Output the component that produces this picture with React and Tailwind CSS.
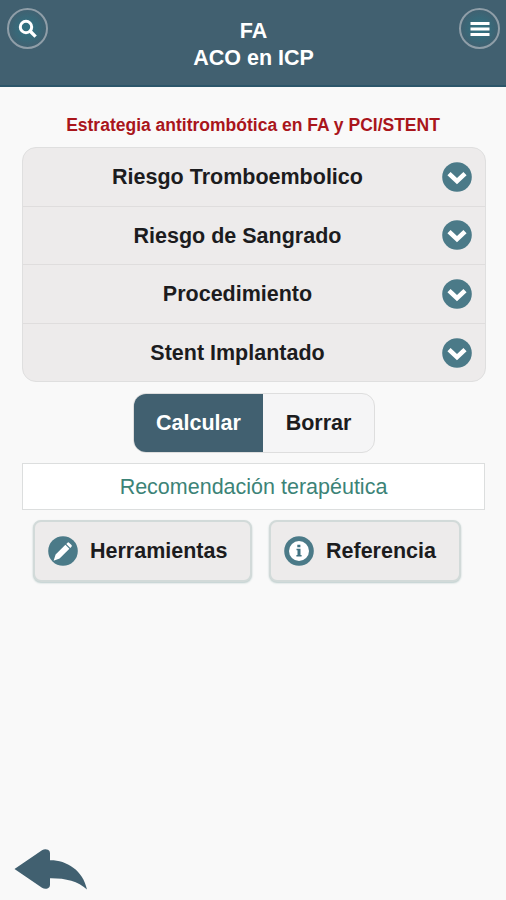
const sections = [
  "Riesgo Tromboembolico",
  "Riesgo de Sangrado",
  "Procedimiento",
  "Stent Implantado",
];

function RoundButton({ label, children }) {
  return (
    <button
      aria-label={label}
      className="flex h-[41px] w-[41px] items-center justify-center rounded-full border-2 border-[#8f9ea8] bg-[radial-gradient(circle,#327080_15%,#416070_75%)]"
    >
      {children}
    </button>
  );
}

function ChevronIcon() {
  return (
    <svg viewBox="0 0 30 30" className="h-[30px] w-[30px] shrink-0">
      <circle cx="15" cy="15" r="14.8" fill="#4b7a88" />
      <path
        d="M7 11.6 L15 19.2 L23 11.6"
        fill="none"
        stroke="#fff"
        strokeWidth="4.6"
      />
    </svg>
  );
}

function PencilIcon() {
  return (
    <svg viewBox="0 0 30 30" className="h-[30px] w-[30px] shrink-0">
      <circle cx="15" cy="15" r="14.8" fill="#4b7a88" />
      <path
        d="M5.6 24.8 L7.6 18.6 L17.4 8.8 L21.4 12.8 L11.6 22.6 Z M18.3 7.9 L19.5 6.7 Q20.3 6 21.1 6.7 L23.5 9.1 Q24.2 9.9 23.5 10.7 L22.3 11.9 Z"
        fill="#fff"
      />
    </svg>
  );
}

function InfoIcon() {
  return (
    <svg viewBox="0 0 30 30" className="h-[30px] w-[30px] shrink-0">
      <circle cx="15" cy="15" r="14.8" fill="#4b7a88" />
      <circle cx="15" cy="15" r="10" fill="#fff" />
      <path
        d="M13.3 8.7 H16.4 V11.2 H13.3 Z M12.5 12.7 H16.5 V19 H17.6 V20.6 H12.4 V19 H13.5 V14.3 H12.5 Z"
        fill="#3f7282"
      />
    </svg>
  );
}

export default function App() {
  return (
    <div className="flex h-[900px] w-[506px] flex-col bg-[#f9f9f9] font-['Liberation_Sans',Arial,sans-serif] text-[21.5px] font-bold text-[#1c1c1e]">
      <header className="flex h-[87px] items-start justify-between border-b-2 border-[#2c566a] bg-[#416070] pt-2 pr-[6px] pl-[7px] text-white">
        <RoundButton label="Buscar">
          <svg viewBox="0 0 20 20" className="h-5 w-5">
            <circle
              cx="8"
              cy="8"
              r="5.7"
              fill="none"
              stroke="#fff"
              strokeWidth="3"
            />
            <path d="M12 12 L17.6 17.6" stroke="#fff" strokeWidth="3.4" />
          </svg>
        </RoundButton>
        <h1 className="pt-[10px] text-center leading-[27px]">
          FA
          <br />
          ACO en ICP
        </h1>
        <RoundButton label="Menu">
          <svg viewBox="0 0 20 16" className="h-4 w-5">
            <path
              d="M0.5 2.4 H19.5 M0.5 8 H19.5 M0.5 13.6 H19.5"
              stroke="#fff"
              strokeWidth="3"
            />
          </svg>
        </RoundButton>
      </header>

      <main className="flex flex-1 flex-col px-[22px] pt-[25px]">
        <h2 className="text-center text-[17.5px] leading-[26px] whitespace-nowrap text-[#a9151b]">
          Estrategia antitrombótica en FA y PCI/STENT
        </h2>

        <div className="mt-[9px] h-[235px] w-[464px] divide-y divide-[#dfdddd] overflow-hidden rounded-[14px] border border-[#dfdfdf] bg-[#edebeb]">
          {sections.map((title) => (
            <button
              key={title}
              className="flex h-[58.5px] w-full items-center pr-[13px] pl-[6px]"
            >
              <span className="flex-1 pt-px pl-[4px] text-center">{title}</span>
              <ChevronIcon />
            </button>
          ))}
        </div>

        <div className="mt-[11px] ml-[111px] flex h-[60px] w-[242px] overflow-hidden rounded-[13px] border border-[#dedede] bg-[#f5f5f6]">
          <button className="w-[129px] bg-[#416070] pt-px text-white">
            Calcular
          </button>
          <button className="flex-1 pt-px">Borrar</button>
        </div>

        <div className="mt-[10px] flex h-[47px] w-[463px] items-center justify-center border border-[#dcdede] bg-white pt-[2px] text-[21.5px] font-normal text-[#3c8377]">
          Recomendación terapéutica
        </div>

        <div className="mt-[10px] flex gap-[17px] pl-[11px]">
          <button className="flex h-[62px] w-[219px] items-center gap-3 rounded-lg border-2 border-[#d2dad9] bg-[#edebeb] pl-[13px] shadow-[0_1px_2px_#b9cbca]">
            <PencilIcon />
            Herramientas
          </button>
          <button className="flex h-[62px] w-[192px] items-center gap-3 rounded-lg border-2 border-[#d2dad9] bg-[#edebeb] pl-[13px] shadow-[0_1px_2px_#b9cbca]">
            <InfoIcon />
            Referencia
          </button>
        </div>
      </main>

      <footer className="pb-2 pl-[14px]">
        <button aria-label="Volver" className="block">
          <svg viewBox="0 0 74 44" className="h-[44px] w-[74px]">
            <path
              d="M0.5 21 L28 2.2 Q31 0.5 34 1.8 Q36 2.5 36 5 V12.3 C52 12 69 22 73 41.5 C64 33 51 30 36 30.2 V37 Q36 39.5 34 40.2 Q31 41.5 28 39.8 Z"
              fill="#416070"
            />
          </svg>
        </button>
      </footer>
    </div>
  );
}
